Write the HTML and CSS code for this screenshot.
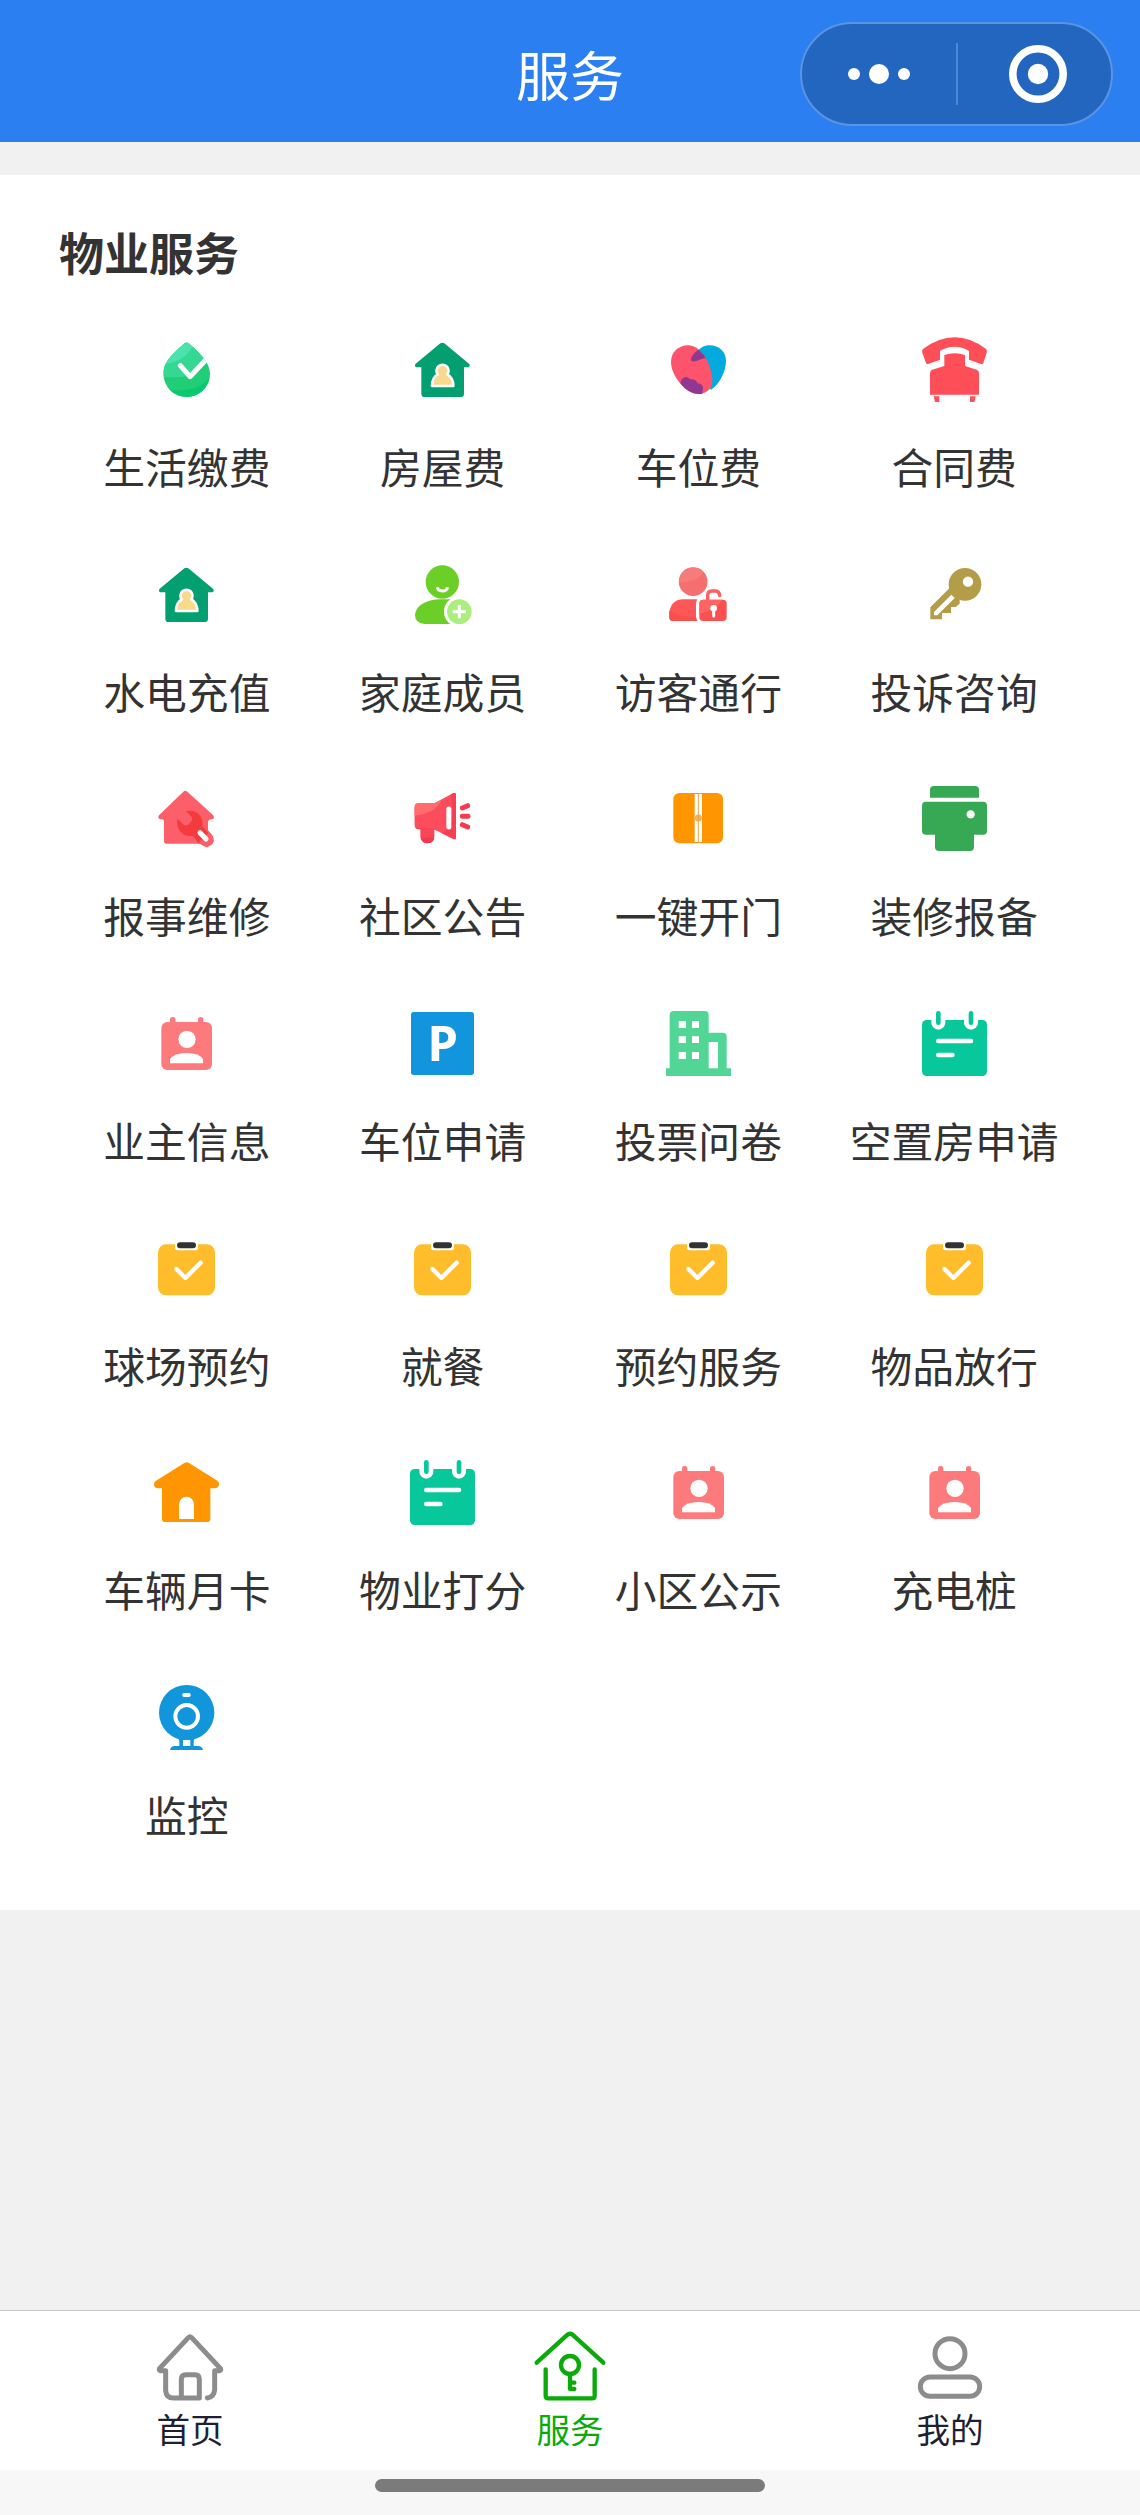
FILE: index.html
```html
<!DOCTYPE html>
<html lang="zh-CN">
<head>
    <meta charset="UTF-8">
    <meta name="viewport" content="width=device-width, initial-scale=1.0">
    <title>服务</title>
    <link rel="stylesheet" href="styles.css">
</head>
<body>
    <!-- Icons used more than once -->
    <svg class="sprite">
        <symbol id="icon-house" viewBox="0 0 195 195">
            <path fill="#039f70" d="M91 19Q97 15 103 19L177 80Q182 86 176 91H162V170Q162 180 152 180H44Q34 180 34 170V91H18Q12 86 17 80Z"/>
            <path fill="#f9da8c" stroke="#fff" stroke-width="8" stroke-linejoin="round" d="M83 112A18 18 0 1 1 112 112Q130 122 130 147H66Q66 122 83 112Z"/>
        </symbol>
        <symbol id="icon-badge" viewBox="0 0 195 195">
            <rect x="22" y="33" width="152" height="144" rx="18" fill="#fd7a7c"/>
            <path fill="#fd7a7c" d="M48 40V24Q48 18 56 18Q64 18 64 24V40ZM132 40V24Q132 18 140 18Q148 18 148 24V40Z"/>
            <circle cx="99" cy="85" r="26" fill="#fff"/>
            <path fill="#fff" d="M48 157V144Q60 126 98 126Q136 126 147 144V157Z"/>
        </symbol>
        <symbol id="icon-calendar" viewBox="0 0 195 195">
            <rect y="27" width="195" height="168" rx="14" fill="#08c79a"/>
            <path stroke="#fff" stroke-width="42" stroke-linecap="round" d="M49 14V35M147 14V35"/>
            <path stroke="#08c79a" stroke-width="14" stroke-linecap="round" d="M49 7V35M147 7V35"/>
            <path stroke="#fff" stroke-width="14" stroke-linecap="round" d="M49 90H147M49 132H91"/>
        </symbol>
        <symbol id="icon-clipboard" viewBox="0 0 195 195">
            <rect x="12" y="25" width="171" height="153" rx="24" fill="#ffbd2b"/>
            <rect x="63" y="14" width="69" height="29" rx="8" fill="#fff"/>
            <rect x="69" y="19" width="57" height="18" rx="9" fill="#333"/>
            <path fill="none" stroke="#fff" stroke-width="13" stroke-linecap="round" stroke-linejoin="round" d="M67 99L94 126L140 80"/>
        </symbol>
    </svg>

    <header class="navbar">
        <h1>服务</h1>
        <div class="capsule">
            <svg class="capsule-more" viewBox="0 0 62 20">
                <circle cx="6" cy="10" r="6"/>
                <circle cx="31" cy="10" r="10"/>
                <circle cx="56" cy="10" r="6"/>
            </svg>
            <span class="capsule-line"></span>
            <svg class="capsule-close" viewBox="0 0 58 58">
                <circle cx="29" cy="29" r="25.2" fill="none" stroke="#fff" stroke-width="7.6"/>
                <circle cx="29" cy="29" r="10.2"/>
            </svg>
        </div>
    </header>

    <main class="panel">
        <h2>物业服务</h2>
        <div class="services">
            <a class="service">
                <svg viewBox="0 0 195 195">
                    <clipPath id="drop"><path d="M92 19Q98 14 104 19C130 42 168 74 168 110A70 70 0 0 1 28 110C28 72 66 42 92 19Z"/></clipPath>
                    <g clip-path="url(#drop)">
                        <rect width="195" height="195" fill="#20cf75"/>
                        <path fill="#35d893" d="M0 0H195V20Q140 121 70 121H0Z"/>
                        <path fill="#4be2ae" d="M0 0H130Q105 70 38 80H0Z"/>
                        <path fill="#08c96f" d="M40 157Q130 170 170 118V195H40Z"/>
                        <path fill="none" stroke="#fff" stroke-width="15" stroke-linecap="round" stroke-linejoin="round" d="M79 86L108 119L168 55"/>
                    </g>
                </svg>
                <span>生活缴费</span>
            </a>
            <a class="service">
                <svg><use href="#icon-house"/></svg>
                <span>房屋费</span>
            </a>
            <a class="service">
                <svg viewBox="0 0 195 195">
                    <path fill="#03aadd" d="M98 38Q113 25 130 25C160 25 180 45 180 72C180 105 158 145 134 159Z"/>
                    <path fill="#fd536d" d="M15 75C15 45 38 25 66 25C108 25 139 88 139 132C139 160 115 171 97 171C58 171 15 115 15 75Z"/>
                    <path fill="#923790" d="M98 38Q111 49 119 63Q102 66 94 71Q82 75 76 72Q73 67 80 55Q88 43 98 38Z"/>
                    <path fill="#923790" d="M43 139Q46 121 60 120Q66 120 73 127Q90 126 95 139Q112 140 111 155L109 170Q70 176 43 139Z"/>
                </svg>
                <span>车位费</span>
            </a>
            <a class="service">
                <svg viewBox="0 0 195 195">
                    <path fill="#fe4e58" d="M3 36Q50 1 98 1Q146 1 192 36Q196 39 194 47L184 78Q182 83 177 81L141 68V42Q98 17 54 42V68L18 81Q14 82 12 78L1 47Q-1 39 3 36Z"/>
                    <path fill="#fe4e58" d="M67 54Q98 44 129 54V87L164 98Q171 101 171 108V173H24V108Q24 101 31 98L67 87Z"/>
                    <path fill="#fe4e58" d="M35 178H52V195H39ZM144 178H161L157 195H144Z"/>
                </svg>
                <span>合同费</span>
            </a>

            <a class="service">
                <svg><use href="#icon-house"/></svg>
                <span>水电充值</span>
            </a>
            <a class="service">
                <svg viewBox="0 0 195 195">
                    <circle cx="97" cy="60" r="50" fill="#6ccf27"/>
                    <path fill="none" stroke="#fff" stroke-width="9" d="M82 76Q84 87 97 87Q110 87 113 76"/>
                    <path fill="#6ccf27" d="M15 160C17 130 50 112 95 112H140V186H45Q15 184 15 160Z"/>
                    <circle cx="148" cy="149" r="46" fill="#fff"/>
                    <circle cx="148" cy="149" r="37" fill="#abee7e"/>
                    <path stroke="#fff" stroke-width="9" d="M128 149H168M148 129V169"/>
                </svg>
                <span>家庭成员</span>
            </a>
            <a class="service">
                <svg viewBox="0 0 195 195">
                    <circle cx="81.5" cy="59" r="43" fill="#f56e70"/>
                    <path fill="#f77b7b" d="M39 62A43 43 0 0 1 114 31Q90 62 39 62Z"/>
                    <path fill="#ff5657" d="M20 177Q10 177 10 165V153Q15 112 52 112H94Q90 118 90 128V165Q90 173 94 177Z"/>
                    <path fill="#f94e4e" d="M20 177Q10 177 10 165V145Q40 168 90 164Q90 173 94 177Z"/>
                    <path fill="none" stroke="#fc6061" stroke-width="10" stroke-linecap="round" d="M125 116V100Q125 87 137 87H149Q160 88 161 101"/>
                    <rect x="100" y="113" width="82" height="64" rx="12" fill="#fb4f50"/>
                    <path fill="#ff6463" d="M112 113H170Q145 150 100 155V125Q100 113 112 113Z"/>
                    <circle cx="143" cy="139" r="10" fill="#fff"/>
                    <path stroke="#fff" stroke-width="9" stroke-linecap="round" d="M143 141V162"/>
                </svg>
                <span>访客通行</span>
            </a>
            <a class="service">
                <svg viewBox="0 0 195 195">
                    <circle cx="129" cy="67" r="49" fill="#b39d49"/>
                    <path fill="#b39d49" d="M86 75L25 136V172H60V153H87V135H101L113 125V105Z"/>
                    <circle cx="138" cy="59" r="15.500" fill="#fff"/>
                    <path fill="#fff" d="M36 150L88 98L98 108L46 160H36Z"/>
                </svg>
                <span>投诉咨询</span>
            </a>

            <a class="service">
                <svg viewBox="0 0 195 195">
                    <path fill="#fc5f6a" d="M88 17Q94 11 100 17L177 87Q184 97 174 100Q162 100 162 110V173H38Q30 173 30 165V104Q28 100 20 100Q9 98 15 88Z"/>
                    <path stroke="#fc5f6a" stroke-width="43" stroke-linecap="round" d="M140 140L158 161"/>
                    <path fill="#f33a3d" d="M96 76Q120 70 136 86Q149 101 145 121L163 141L133 172L117 149Q96 153 83 141Q66 123 70 98L90 117Q97 121 105 114L113 105Q117 96 111 91Z"/>
                    <path fill="#fc5f6a" d="M133 172L141 162L149 167L163 156L168 147L180 165L160 184Z"/>
                    <path stroke="#fff" stroke-width="15" stroke-linecap="round" d="M138 140L156 159"/>
                </svg>
                <span>报事维修</span>
            </a>
            <a class="service">
                <svg viewBox="0 0 195 195">
                    <path stroke="#fb4658" stroke-width="42" stroke-linecap="round" d="M52 120V151"/>
                    <path fill="#f33850" d="M32 155H73Q70 172 52 172Q36 172 32 155Z"/>
                    <clipPath id="horn"><path d="M28 51H75L130 21Q138 19 138 26V156Q138 163 130 159L72 130H28Q13 130 13 115V66Q13 51 28 51Z"/></clipPath>
                    <g clip-path="url(#horn)">
                        <rect width="195" height="195" fill="#fd4d5c"/>
                        <path fill="#ff6b6f" d="M0 30H98Q85 86 0 90Z"/>
                        <path fill="#f33850" d="M118 0H195V195H90L95 140Q145 120 118 0ZM0 131Q10 119 20 125L80 128V150H0Z" opacity=".7"/>
                    </g>
                    <path stroke="#fff" stroke-width="15" stroke-linecap="round" d="M116.500 69V123"/>
                    <path stroke="#f63a4f" stroke-width="15" stroke-linecap="round" d="M157 66L173 59M157 91H174M157 116L173 123"/>
                </svg>
                <span>社区公告</span>
            </a>
            <a class="service">
                <svg viewBox="0 0 195 195">
                    <rect x="22" y="21" width="149" height="151" rx="18" fill="#ff9500"/>
                    <rect x="86" y="24" width="22" height="144" fill="#fff"/>
                    <circle cx="97" cy="96" r="10.500" fill="#f3b256"/>
                    <path stroke="#e3a44c" stroke-width="3" d="M97 22V171"/>
                </svg>
                <span>一键开门</span>
            </a>
            <a class="service">
                <svg viewBox="0 0 195 195">
                    <path fill="#37a854" d="M24 35V12Q24 0 36 0H159Q171 0 171 12V35Z"/>
                    <rect y="47" width="195" height="99" rx="12" fill="#37a854"/>
                    <rect x="39" y="100" width="117" height="95" rx="12" fill="#37a854"/>
                    <circle cx="146" cy="85" r="12.500" fill="#fff"/>
                </svg>
                <span>装修报备</span>
            </a>

            <a class="service">
                <svg><use href="#icon-badge"/></svg>
                <span>业主信息</span>
            </a>
            <a class="service">
                <svg viewBox="0 0 195 195">
                    <rect x="3" y="3" width="189" height="189" rx="8" fill="#1395de"/>
                    <text class="parking" x="52.500" y="149">P</text>
                </svg>
                <span>车位申请</span>
            </a>
            <a class="service">
                <svg viewBox="0 0 195 195">
                    <path fill="#51d696" fill-rule="evenodd" d="M11 172V12Q11 0 23 0H116Q128 0 128 12V65H170Q182 65 182 77V172H195V195H0V172ZM38 30V51H60V30ZM78 30V51H99V30ZM38 76V96H60V76ZM78 76V96H99V76ZM38 123V144H60V123ZM78 123V144H99V123ZM128 93V172H156V93Z"/>
                </svg>
                <span>投票问卷</span>
            </a>
            <a class="service">
                <svg><use href="#icon-calendar"/></svg>
                <span>空置房申请</span>
            </a>

            <a class="service">
                <svg><use href="#icon-clipboard"/></svg>
                <span>球场预约</span>
            </a>
            <a class="service">
                <svg><use href="#icon-clipboard"/></svg>
                <span>就餐</span>
            </a>
            <a class="service">
                <svg><use href="#icon-clipboard"/></svg>
                <span>预约服务</span>
            </a>
            <a class="service">
                <svg><use href="#icon-clipboard"/></svg>
                <span>物品放行</span>
            </a>

            <a class="service">
                <svg viewBox="0 0 195 195">
                    <path fill="#ff9500" fill-rule="evenodd" d="M91 9Q98 4 105 9L190 62Q196 67 195 74Q193 84 183 85H169V176Q169 186 159 186H34Q24 186 24 176V85H12Q1 84 0 74Q-1 67 6 62ZM75 177H120V133A22.500 22.500 0 0 0 75 133Z"/>
                </svg>
                <span>车辆月卡</span>
            </a>
            <a class="service">
                <svg><use href="#icon-calendar"/></svg>
                <span>物业打分</span>
            </a>
            <a class="service">
                <svg><use href="#icon-badge"/></svg>
                <span>小区公示</span>
            </a>
            <a class="service">
                <svg><use href="#icon-badge"/></svg>
                <span>充电桩</span>
            </a>

            <a class="service">
                <svg viewBox="0 0 195 195">
                    <circle cx="98" cy="83" r="83" fill="#1296db"/>
                    <path fill="#1296db" d="M66 155Q76 160 76 170V183H60Q50 185 48 195H147Q145 185 135 183H119V170Q119 160 130 155Z"/>
                    <rect x="87" y="165" width="22" height="18" fill="#fff"/>
                    <circle cx="98" cy="94" r="34" fill="none" stroke="#fff" stroke-width="12"/>
                    <rect x="85" y="24" width="25" height="12" rx="5" fill="#fff"/>
                </svg>
                <span>监控</span>
            </a>
        </div>
    </main>

    <!-- Bottom tabs -->
    <nav class="tabbar">
        <a class="tab">
            <svg viewBox="0 0 210 210">
                <path d="M32 119H16Q11 117 14 112L100 20Q105 15 110 20L196 112Q199 117 194 119H179V176Q177 198 157 201M32 119V178Q33 201 56 201H133V145Q133 131 120 131H93Q79 131 79 145V201"/>
            </svg>
            <span>首页</span>
        </a>
        <a class="tab active">
            <svg viewBox="0 0 210 210">
                <path d="M5 95L95 13Q105 4 115 13L205 95M32 115V194Q32 202 40 202H171Q179 202 179 194V115"/>
                <circle cx="105" cy="102" r="27"/>
                <path d="M105 130V174H118M105 155H118"/>
            </svg>
            <span>服务</span>
        </a>
        <a class="tab">
            <svg viewBox="0 0 210 210">
                <circle cx="105" cy="68" r="45"/>
                <rect x="16" y="138" width="178" height="58" rx="29"/>
            </svg>
            <span>我的</span>
        </a>
    </nav>
    <footer class="gesture">
        <div class="gesture-bar"></div>
    </footer>
</body>
</html>
```
FILE: styles.css
```css
* {
    box-sizing: border-box;
}

body {
    margin: 0;
    height: 2515px;
    display: flex;
    flex-direction: column;
    background: #f1f1f1;
    color: #333;
    font-family: "Noto Sans CJK SC", sans-serif;
}

h1, h2 {
    margin: 0;
}

.sprite {
    position: absolute;
    width: 0;
    height: 0;
}

/* Top bar */
.navbar {
    height: 142px;
    display: grid;
    grid-template-columns: 1fr auto 1fr;
    align-items: start;
    background: #2b7ff1;
    border-bottom: 1px solid #3f7fc8;
    color: #fff;
}

.navbar h1 {
    grid-column: 2;
    padding-top: 34px;
    font-size: 54px;
    font-weight: 400;
    line-height: 80px;
}

.capsule {
    justify-self: end;
    width: 313px;
    height: 104px;
    margin: 22px 27px 0 0;
    padding: 0 44px 0 46px;
    display: flex;
    align-items: center;
    background: #2366bf;
    border: 2px solid #5a94e2;
    border-radius: 52px;
    fill: #fff;
}

.capsule-more {
    width: 62px;
    height: 20px;
}

.capsule-line {
    width: 2px;
    height: 62px;
    margin-left: 46px;
    background: #4f88d2;
}

.capsule-close {
    width: 58px;
    height: 58px;
    margin-left: auto;
}

/* Service grid */
.panel {
    margin-top: 33px;
    height: 1735px;
    padding: 47px 58px 0 59px;
    background: #fff;
}

.panel h2 {
    font-size: 45px;
    font-weight: 700;
    line-height: 60px;
    margin-bottom: 55px;
}

.services {
    display: grid;
    grid-template-columns: repeat(4, 1fr);
    grid-auto-rows: 224.7px;
}

.service {
    display: flex;
    flex-direction: column;
    align-items: center;
    font-size: 41.8px;
    line-height: 60px;
    white-space: nowrap;
}

.service svg {
    width: 65px;
    height: 65px;
    margin-bottom: 34px;
    overflow: visible;
}

.parking {
    fill: #fff;
    font-family: "Noto Sans", sans-serif;
    font-size: 147px;
    font-weight: 700;
}

/* Bottom tabs */
.tabbar {
    margin-top: auto;
    height: 160px;
    display: flex;
    background: #fff;
    border-top: 1px solid #c8c8c8;
    color: #1f1f33;
}

.tab {
    flex: 1;
    display: flex;
    flex-direction: column;
    align-items: center;
    padding-top: 20px;
    font-size: 33.6px;
    line-height: 50px;
}

.tab svg {
    width: 70px;
    height: 70px;
    margin-bottom: 3px;
    overflow: visible;
    fill: none;
    stroke: #8c8c8c;
    stroke-width: 15;
    stroke-linecap: round;
    stroke-linejoin: round;
}

.tab.active {
    color: #09aa09;
}

.tab.active svg {
    stroke: #09aa09;
    stroke-width: 13;
}

.gesture {
    height: 45px;
    padding-top: 9px;
    background: #f7f7f7;
}

.gesture-bar {
    width: 390px;
    height: 13px;
    margin: 0 auto;
    border-radius: 7px;
    background: #7b7b7b;
}
```
